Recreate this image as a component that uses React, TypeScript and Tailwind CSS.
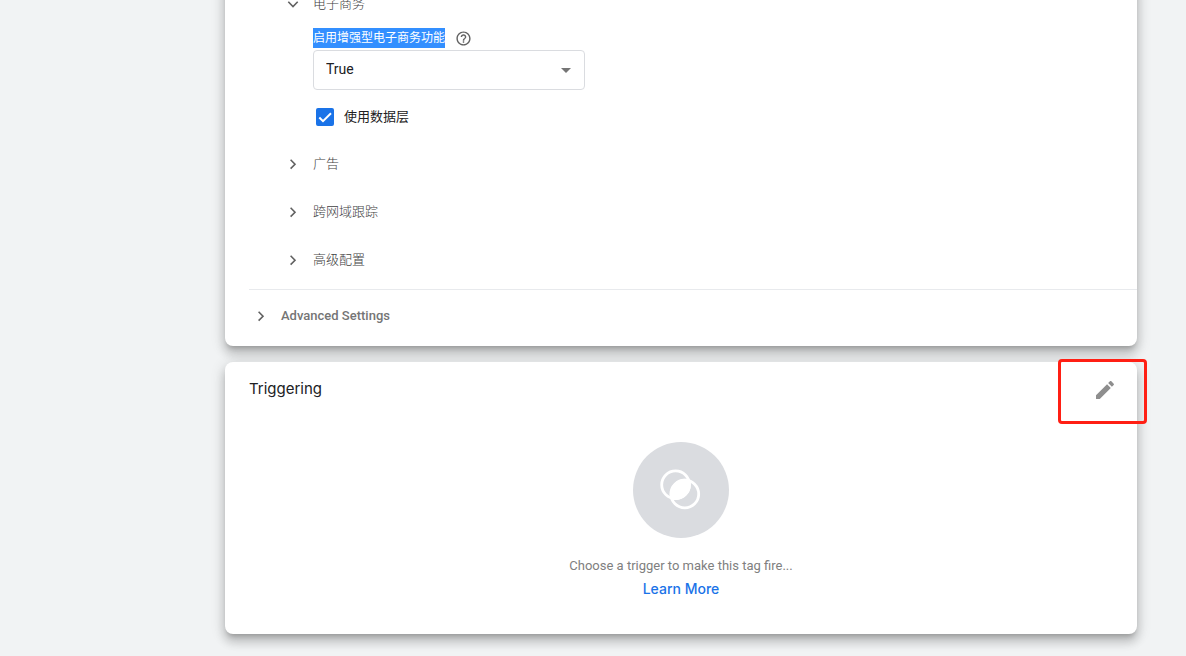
import { useState } from 'react';
import type { ReactNode } from 'react';

const card =
  'relative rounded-lg bg-white shadow-[0_5px_5px_-3px_rgba(0,0,0,0.2),0_8px_10px_1px_rgba(0,0,0,0.14),0_3px_14px_2px_rgba(0,0,0,0.12)]';

function Chevron({ open = false }: { open?: boolean }) {
  return (
    <svg viewBox="0 0 16 16" className="size-4 shrink-0" fill="none" stroke="#616161" strokeWidth="1.6" aria-hidden="true">
      <path d={open ? 'M3.3 5.8 8 10.5l4.7-4.7' : 'M5.6 3.8 10 8.200l-4.400 4.400'} />
    </svg>
  );
}

function Section({ open, children }: { open?: boolean; children: ReactNode }) {
  return (
    <button type="button" aria-expanded={!!open} className="flex h-12 w-full items-center gap-3 text-left text-[13px] leading-5 font-light text-[#424242]">
      <Chevron open={open} />
      <span>{children}</span>
    </button>
  );
}

export default function App() {
  const [useLayer, setUseLayer] = useState(true);
  return (
    <div className="min-h-screen overflow-hidden bg-[#f1f3f4] pr-[49px] pb-[22px] pl-[225px] font-['Roboto','Noto_Sans_CJK_SC',sans-serif]">
      <main className="-mt-5 flex flex-col gap-4">
        <section className={card}>
          <div className="pl-[60px]">
            <Section open>电子商务</Section>
            <div className="pl-7">
              <div className="flex h-[22px] items-start gap-[10px]">
                <label htmlFor="enhanced" className="bg-[#338fff] text-xs leading-5 text-white">
                  启用增强型电子商务功能
                </label>
                <button type="button" aria-label="Help" className="mt-0.5">
                  <svg viewBox="0 0 24 24" className="size-[17px]" fill="#616161">
                    <path d="M11 18h2v-2h-2v2zm1-16C6.48 2 2 6.48 2 12s4.480 10 10 10 10-4.480 10-10S17.520 2 12 2zm0 18c-4.410 0-8-3.590-8-8s3.590-8 8-8 8 3.590 8 8-3.590 8-8 8zm0-14c-2.210 0-4 1.790-4 4h2c0-1.100.9-2 2-2s2 .9 2 2c0 2-3 1.750-3 5h2c0-2.250 3-2.500 3-5 0-2.210-1.790-4-4-4z" />
                  </svg>
                </button>
              </div>
              <div className="relative w-[272px]">
                <select id="enhanced" defaultValue="True" className="block h-10 w-full appearance-none rounded border border-[#dadce0] bg-white px-3 pb-0.5 text-sm text-[#202124]">
                  <option>True</option>
                  <option>False</option>
                </select>
                <svg viewBox="0 0 10 5" className="pointer-events-none absolute top-[18px] right-[14px] h-[5px] w-[10px]" fill="#757575" aria-hidden="true">
                  <path d="M0 0h10L5 5z" />
                </svg>
              </div>
              <label className="flex h-[50px] items-center gap-2.5 pt-1 pl-[3px] text-[13px] leading-5 text-[#212121]">
                <span className="grid size-[18px] place-items-center">
                  <input
                    type="checkbox"
                    checked={useLayer}
                    onChange={(e) => setUseLayer(e.target.checked)}
                    className="col-start-1 row-start-1 size-[18px] appearance-none rounded-xs border-2 border-[#757575] bg-white checked:border-[#1a73e8] checked:bg-[#1a73e8]"
                  />
                  <svg viewBox="0 0 18 18" className="pointer-events-none col-start-1 row-start-1 size-[18px]" fill="none" stroke="#fff" strokeWidth="2" aria-hidden="true">
                    <path d="M3.300 9.500 7 13.200l8-8" />
                  </svg>
                </span>
                使用数据层
              </label>
            </div>
            <Section>广告</Section>
            <Section>跨网域跟踪</Section>
            <Section>高级配置</Section>
          </div>
          <div className="mt-[5px] ml-6 border-t border-[#e8eaed] pb-1 pl-1">
            <button type="button" className="flex h-[52px] w-full items-center gap-3 text-left text-[13px] leading-5 font-medium text-[#757575]">
              <Chevron />
              <span>Advanced Settings</span>
            </button>
          </div>
        </section>

        <section className={`${card} pb-8`}>
          <header className="flex items-center justify-between pt-3 pr-4 pl-6">
            <h2 className="pb-0.5 font-['Inter',sans-serif] text-[15px] leading-7 text-[#202124]">Triggering</h2>
            <button type="button" aria-label="Edit triggering" className="p-1">
              <svg viewBox="0 0 24 24" className="size-6" fill="#8e8e8e">
                <path d="M3 17.250V21h3.750L17.810 9.940l-3.750-3.750L3 17.250zM20.710 7.040c.39-.39.39-1.020 0-1.410l-2.340-2.340c-.39-.39-1.020-.39-1.410 0l-1.830 1.830 3.750 3.750 1.830-1.830z" />
              </svg>
            </button>
          </header>
          <div className="flex flex-col items-center pt-9">
            <svg viewBox="0 0 96 96" className="size-24" aria-hidden="true">
              <circle cx="48" cy="48" r="48" fill="#dadce0" />
              <g fill="none" stroke="#fff" strokeWidth="2.8">
                <circle cx="42.600" cy="42.800" r="13.900" />
                <circle cx="51.800" cy="52" r="13.900" />
              </g>
              <path fill="#fff" d="M56.900 37.700A15.200 15.200 0 0 1 37.700 57 15.200 15.200 0 0 1 56.900 37.700z" />
            </svg>
            <p className="mt-4 text-[13px] leading-6 text-[#808080]">Choose a trigger to make this tag fire...</p>
            <a href="#learn-more" className="pb-0.5 font-['Inter',sans-serif] text-sm leading-[22px] font-medium text-[#1a73e8]">
              Learn More
            </a>
          </div>
          <div className="pointer-events-none absolute -top-[3px] -right-[10px] h-[65px] w-[89px] rounded-sm border-3 border-[#ff1f14]" />
        </section>
      </main>
    </div>
  );
}
